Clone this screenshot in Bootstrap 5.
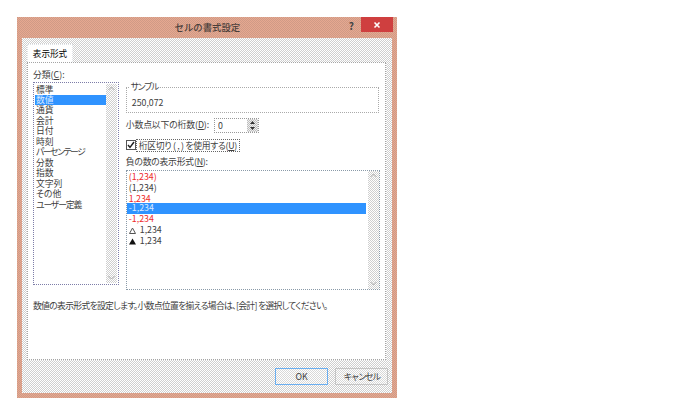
<!DOCTYPE html>
<html lang="ja">
<head>
<meta charset="utf-8">
<title>セルの書式設定</title>
<link href="https://cdn.jsdelivr.net/npm/bootstrap@5.3.0/dist/css/bootstrap.min.css" rel="stylesheet">
<style>
html,body{background:#fff;margin:0;}
body{font:8.8px/10.6px "Noto Sans CJK JP","Liberation Sans",sans-serif;font-feature-settings:"palt";color:#404040;width:698px;height:419px;overflow:hidden;}
.xl-win{margin:17px 0 0 17px;width:380px;height:381px;padding:0 5px 5px;background:repeating-conic-gradient(#e6a890 0 25%,#cf9a86 0 50%) 0 0/2px 2px;}
.xl-title{height:21px;margin:0 -5px;padding:0 4px 0 0;}
.xl-title-text{flex:1;text-align:center;font-size:9.4px;font-weight:500;color:#4a3e3a;padding-left:49px;padding-top:5px;font-feature-settings:normal;}
.xl-help{font-size:10px;font-weight:700;color:#444;margin-right:7px;line-height:12px;margin-top:-4px;}
.xl-close{width:32px;height:15px;background:#cf3f3f;align-self:flex-start;}
.xl-body{height:355px;padding:6px 6px 0 5px;background:repeating-conic-gradient(#cfcfcf 0 25%,#fff 0 50%) 0 0/2px 2px;}
.xl-tabs{border:0;height:18px;}
.xl-tab.nav-link{height:18px;width:46px;padding:3px 0 0;margin:0;text-align:center;background:#fff;border:1px dotted #999;border-bottom:0;border-radius:0;color:#404040;font-size:8.6px;line-height:10.6px;}
.xl-panel{height:298px;background:#fff;border:1px dotted #a5a5a5;padding:5px 5px 0;}
.xl-label{height:14px;padding-top:2px;}
.xl-lists{gap:7px;}
.xl-left{width:86px;height:203px;border:1px dotted #7d7da8;padding:1px;}
.xl-list{flex:1;min-width:0;border-radius:0;padding-top:1px;}
.xl-list .list-group-item{border:0;padding:0 0 0 1px;height:10.55px;line-height:10.55px;font-size:8.8px;background:transparent;color:#404040;border-radius:0;white-space:nowrap;}
.xl-list .list-group-item.active{background:#2f93ff;color:#dbeaff;}
.xl-list .list-group-item.xl-red{color:#ee2b2b;}
.xl-kana-a{letter-spacing:-1.4px;}
.xl-kana-b{letter-spacing:-1.1px;}
.xl-scroll{width:11px;background:repeating-conic-gradient(#cfcfcf 0 25%,#fff 0 50%) 0 0/2px 2px;padding:2px 0 3px;}
.xl-scroll svg{display:block;margin:0 auto;}
.xl-right{width:255px;}
.xl-sample{height:31px;padding-top:5px;margin:0 1px 0 0;position:relative;}
.xl-sample-box{border:1px dotted #aaa;height:26px;padding:10px 0 0 5px;}
.xl-sample-leg{position:absolute;left:3px;top:0;background:#fff;padding:0 2px;letter-spacing:-1.2px;}
.xl-dec{margin-top:5px;height:15px;letter-spacing:-.1px;}
.xl-spin{margin-left:5px;width:45px;height:15px;border:1px dotted #999;}
.xl-spin .form-control{border:0;border-radius:0;padding:0 0 0 3px;font-size:8.8px;height:13px;min-height:0;flex:1;color:#404040;background:#fff;line-height:13px;}
.xl-spin-btns{width:11px;background:repeating-conic-gradient(#bdbdbd 0 25%,#efefef 0 50%) 0 0/2px 2px;}
.xl-chk{margin-top:6px;height:13px;}
.xl-box{width:10px;height:10px;border:1px solid #555;background:#fff;margin-top:1px;}
.xl-focus{height:13px;padding:1px 2px 0 2px;border:1px dotted #666;white-space:pre;letter-spacing:-.3px;}
.xl-neg-label{margin-top:5px;height:13px;letter-spacing:-.2px;}
.xl-right-list{height:120px;border:1px dotted #8a9aa8;}
.xl-right-list .xl-list{padding-top:1px;}
.xl-right-list .xl-scroll{margin-left:2px;}
.xl-right-list .list-group-item{padding-left:2px;height:10.8px;line-height:10.8px;}
.xl-tri{display:inline-block;margin:0 4px 0 0;vertical-align:-1px;}
.xl-desc{margin-top:11px;white-space:nowrap;letter-spacing:-.68px;}
.xl-foot{justify-content:flex-end;gap:7px;margin-top:8px;margin-right:-2px;}
.xl-btn.btn{width:53px;height:17px;padding:0;border-radius:0;font-size:8.8px;line-height:14px;color:#404040;background:repeating-conic-gradient(#d8d8d8 0 25%,#fff 0 50%) 0 0/2px 2px;border:1px solid #c4c4c4;}
.xl-btn.xl-ok.btn{border-color:#6aaef0;}
.xl-btn.xl-cancel.btn{letter-spacing:-1.6px;}
</style>
</head>
<body>
<div class="xl-win">
  <div class="xl-title d-flex">
    <div class="xl-title-text">セルの書式設定</div>
    <div class="xl-help align-self-center">?</div>
    <div class="xl-close d-flex align-items-center justify-content-center">
      <svg width="8" height="8" viewBox="0 0 8 8"><path d="M1.5 1.5l5 5M6.5 1.5l-5 5" stroke="#fff" stroke-width="1.6"/></svg>
    </div>
  </div>
  <div class="xl-body">
    <ul class="nav nav-tabs xl-tabs">
      <li class="nav-item"><a class="nav-link active xl-tab" href="#">表示形式</a></li>
    </ul>
    <div class="xl-panel">
      <div class="xl-label">分類(<u>C</u>):</div>
      <div class="d-flex xl-lists">
        <div class="xl-left d-flex">
          <div class="list-group xl-list">
            <div class="list-group-item">標準</div>
            <div class="list-group-item active">数値</div>
            <div class="list-group-item">通貨</div>
            <div class="list-group-item">会計</div>
            <div class="list-group-item">日付</div>
            <div class="list-group-item">時刻</div>
            <div class="list-group-item xl-kana-a">パーセンテージ</div>
            <div class="list-group-item">分数</div>
            <div class="list-group-item">指数</div>
            <div class="list-group-item">文字列</div>
            <div class="list-group-item">その他</div>
            <div class="list-group-item xl-kana-b">ユーザー定義</div>
          </div>
          <div class="xl-scroll d-flex flex-column justify-content-between">
            <svg width="7" height="5" viewBox="0 0 7 5"><path d="M.5 4L3.5 1l3 3" fill="none" stroke="#aaa"/></svg>
            <svg width="7" height="5" viewBox="0 0 7 5"><path d="M.5 1L3.5 4l3-3" fill="none" stroke="#aaa"/></svg>
          </div>
        </div>
        <div class="xl-right">
          <div class="xl-sample">
            <div class="xl-sample-box">250,072</div>
            <div class="xl-sample-leg">サンプル</div>
          </div>
          <div class="xl-dec d-flex align-items-center">
            <span>小数点以下の桁数(<u>D</u>):</span>
            <div class="xl-spin d-flex">
              <input class="form-control" value="0" aria-label="小数点以下の桁数">
              <div class="xl-spin-btns d-flex flex-column justify-content-around align-items-center">
                <svg width="5" height="3" viewBox="0 0 5 3"><path d="M2.5 0L5 3H0z" fill="#333"/></svg>
                <svg width="5" height="3" viewBox="0 0 5 3"><path d="M0 0h5L2.5 3z" fill="#333"/></svg>
              </div>
            </div>
          </div>
          <div class="xl-chk d-flex">
            <div class="xl-box d-flex align-items-center justify-content-center">
              <svg width="8" height="8" viewBox="0 0 8 8"><path d="M1 4l2 2.4L7 1" fill="none" stroke="#222" stroke-width="1.5"/></svg>
            </div>
            <div class="xl-focus">桁区切り ( , ) を使用する(<u>U</u>)</div>
          </div>
          <div class="xl-neg-label">負の数の表示形式(<u>N</u>):</div>
          <div class="xl-right-list d-flex">
            <div class="list-group xl-list">
              <div class="list-group-item xl-red">(1,234)</div>
              <div class="list-group-item">(1,234)</div>
              <div class="list-group-item xl-red">1,234</div>
              <div class="list-group-item active">-1,234</div>
              <div class="list-group-item xl-red">-1,234</div>
              <div class="list-group-item"><svg class="xl-tri" width="7" height="7" viewBox="0 0 7 7"><path d="M3.5 1L6.5 6.5H.5z" fill="none" stroke="#555"/></svg>1,234</div>
              <div class="list-group-item"><svg class="xl-tri" width="7" height="7" viewBox="0 0 7 7"><path d="M3.5 .5L7 6.5H0z" fill="#111"/></svg>1,234</div>
            </div>
            <div class="xl-scroll d-flex flex-column justify-content-between">
              <svg width="7" height="5" viewBox="0 0 7 5"><path d="M.5 4L3.5 1l3 3" fill="none" stroke="#aaa"/></svg>
              <svg width="7" height="5" viewBox="0 0 7 5"><path d="M.5 1L3.5 4l3-3" fill="none" stroke="#aaa"/></svg>
            </div>
          </div>
        </div>
      </div>
      <div class="xl-desc">数値の表示形式を設定します。小数点位置を揃える場合は、[会計] を選択してください。</div>
    </div>
    <div class="d-flex xl-foot">
      <button class="btn xl-btn xl-ok" type="button">OK</button>
      <button class="btn xl-btn xl-cancel" type="button">キャンセル</button>
    </div>
  </div>
</div>
<script src="https://cdn.jsdelivr.net/npm/bootstrap@5.3.0/dist/js/bootstrap.bundle.min.js"></script>
</body>
</html>
